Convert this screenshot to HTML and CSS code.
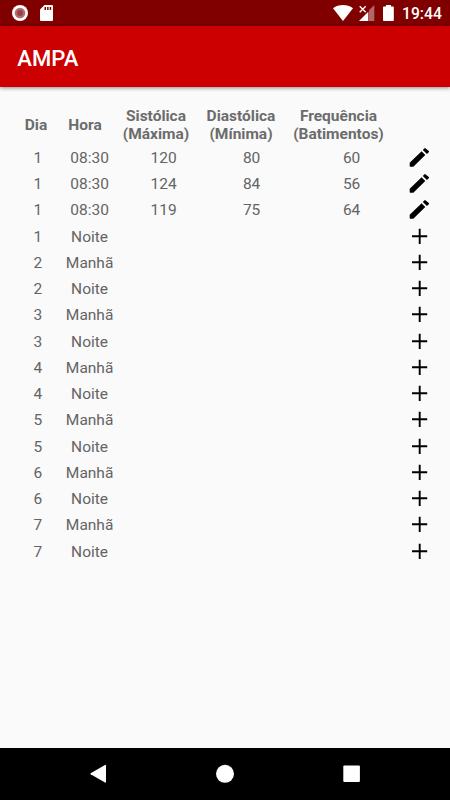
FILE: index.html
```html
<!DOCTYPE html>
<html lang="pt">
<head>
<meta charset="utf-8">
<title>AMPA</title>
<link rel="stylesheet" href="styles.css">
</head>
<body>
<div class="status">
  <svg class="rec" width="16" height="16" viewBox="0 0 16 16"><circle cx="8" cy="8" r="8" fill="#fff"/><circle cx="8" cy="8" r="5.3" fill="#b76b6f"/><circle cx="8" cy="8" r="3" fill="#934247"/></svg>
  <svg class="sd" width="13" height="16" viewBox="0 0 13 16"><path fill="#fff" d="M4.500 0H12q1 0 1 1V15q0 1-1 1H1q-1 0-1-1V4.500z"/><path fill="#800000" d="M4.500 2h1.500v3H4.500zM7.100 2h1.500v3H7.100zM9.700 2h1.500v3H9.700z"/></svg>
  <svg class="wifi" width="20" height="16" viewBox="0 0 20 16"><path fill="#fff" d="M0 3.200Q4.400 0 10 0t10 3.200L10 16z"/></svg>
  <svg class="signal" width="16" height="16" viewBox="0 0 16 16"><path fill="#b36666" d="M15.300 0v16H10V5.300z"/><path fill="#fff" d="M0 16L9.300 6.700V16z"/><path stroke="#fff" stroke-width="1.300" d="M.7 1.300l6 6M6.700 1.300l-6 6"/></svg>
  <svg class="battery" width="11" height="16" viewBox="0 0 11 16"><path fill="#fff" d="M3 0h5v1.500h2q.8 0 .8.800V15.200q0 .8-.8.800H.8Q0 16 0 15.200V2.300q0-.8.800-.8H3z"/></svg>
  <span class="clock">19:44</span>
</div>
<header class="toolbar"><h1>AMPA</h1></header>
<main>
  <div class="head">
    <span>Dia</span><span>Hora</span><span>Sistólica<br>(Máxima)</span><span>Diastólica<br>(Mínima)</span><span>Frequência<br>(Batimentos)</span>
  </div>
  <div class="rows" id="rows"></div>
</main>
<nav>
  <svg width="450" height="52" viewBox="0 0 450 52"><path fill="#fff" d="M90.700 25.300q-.8.500 0 1L105 34.600q1 .5 1-.6V17.600q0-1.100-1-.6z"/><circle cx="225" cy="25.800" r="9" fill="#fff"/><rect x="343.300" y="17.500" width="16.600" height="16.600" rx="1" fill="#fff"/></svg>
</nav>
<script src="script.js"></script>
</body>
</html>
```
FILE: styles.css
```css
* { box-sizing: border-box; }
body {
  margin: 0;
  width: 450px;
  height: 800px;
  display: flex;
  flex-direction: column;
  overflow: hidden;
  background: #fafafa;
  font-family: Roboto, "Liberation Sans", sans-serif;
}
svg { display: block; flex: none; }
.status {
  height: 26px;
  flex: none;
  display: flex;
  align-items: flex-start;
  padding: 5px 7px 0 12px;
  background: #800000;
  color: #fff;
}
.sd { margin-left: 12px; }
.wifi { margin-left: auto; }
.signal { margin-left: 6px; }
.battery { margin-left: 8px; }
.clock {
  width: 41px;
  margin-left: 8px;
  font-size: 15.7px;
  font-weight: 500;
  line-height: 18px;
  white-space: nowrap;
}
.toolbar {
  height: 61px;
  flex: none;
  display: flex;
  align-items: center;
  padding: 3px 17.3px 0;
  background: #cc0000;
  box-shadow: 0 1px 4px rgba(0, 0, 0, .45);
}
h1 {
  margin: 0;
  color: #fff;
  font-size: 22.1px;
  font-weight: 500;
}
main {
  flex: 1;
  padding: 19px 16px 0;
}
.head, .row { display: grid; align-items: center; justify-items: center; }
.head {
  height: 38px;
  grid-template-columns: 40px 58px 84px 86px 109px;
  color: #6c6c6c;
  font-size: 15.5px;
  font-weight: 700;
  line-height: 18px;
  text-align: center;
}
.rows { padding-top: .8px; }
.row {
  height: 26.25px;
  grid-template-columns: 43.6px 60px 88px 88px 112px 22px;
  color: #646464;
  font-size: 15.5px;
  line-height: 18px;
}
nav {
  height: 52px;
  flex: none;
  background: #000;
}
```
FILE: script.js
```js
const entries = [
  [1, "08:30", 120, 80, 60],
  [1, "08:30", 124, 84, 56],
  [1, "08:30", 119, 75, 64],
  [1, "Noite"],
  [2, "Manhã"], [2, "Noite"],
  [3, "Manhã"], [3, "Noite"],
  [4, "Manhã"], [4, "Noite"],
  [5, "Manhã"], [5, "Noite"],
  [6, "Manhã"], [6, "Noite"],
  [7, "Manhã"], [7, "Noite"]
];
const pencil = '<svg width="26" height="26" viewBox="0 0 26 26"><path d="M3.700 17.800L15.600 6.200l3.700 3.700L7.300 21.700H4.300q-.6 0-.6-.6zM16.800 5l1.500-1.600q.7-.6 1.400 0l3.100 2.700q.6.600 0 1.200L20.900 9z"/></svg>';
const plus = '<svg width="26" height="26" viewBox="0 0 26 26"><path fill="none" stroke="#000" stroke-width="1.900" d="M6 12.300h15.200M13.700 4.700v15.400"/></svg>';
document.getElementById("rows").innerHTML = entries.map(e => {
  const cells = [0, 1, 2, 3, 4].map(i => `<span>${e[i] ?? ""}</span>`).join("");
  return `<div class="row">${cells}${e.length > 2 ? pencil : plus}</div>`;
}).join("");
```
